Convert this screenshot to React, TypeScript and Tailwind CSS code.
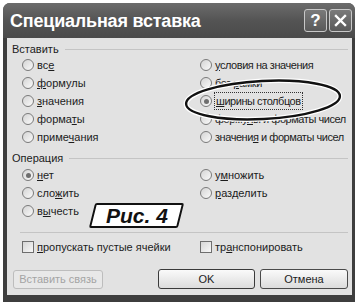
type Part = [string, string, string];

const Radio = ({ t, on = false, focus = false, tight = false }: { t: Part; on?: boolean; focus?: boolean; tight?: boolean }) => (
  <div className={`flex items-center h-[18px] gap-[3px] whitespace-nowrap ${tight ? "tracking-[-0.45px]" : ""}`}>
    <span className="w-[12px] h-[12px] rounded-full border border-[#7a7a7a] bg-gradient-to-br from-[#d4d4d4] to-[#fafafa] flex items-center justify-center shrink-0">
      {on && <span className="w-[5px] h-[5px] rounded-full bg-[#6e6e6e]" />}
    </span>
    <span className={focus ? "outline outline-1 outline-dotted outline-[#333] px-[1px]" : ""}>
      {t[0]}
      <span className="underline">{t[1]}</span>
      {t[2]}
    </span>
  </div>
);

const Check = ({ t }: { t: Part }) => (
  <div className="flex items-center h-[18px] gap-[3px] whitespace-nowrap">
    <span className="w-[12px] h-[12px] border border-[#6e6e6e] bg-gradient-to-br from-[#d6d6d6] to-[#f8f8f8] shrink-0" />
    <span>
      {t[0]}
      <span className="underline">{t[1]}</span>
      {t[2]}
    </span>
  </div>
);

const GroupLabel = ({ text }: { text: string }) => (
  <div className="flex items-center h-[12px] gap-[6px]">
    <span>{text}</span>
    <div className="flex-1 h-px bg-[#c4c4c4]" />
  </div>
);

export default function App() {
  return (
    <div className="w-[363px] h-[302px] bg-white pt-[3px] pl-[3px] font-['Liberation_Sans',Arial,sans-serif] text-[11px] text-[#1c1c1c] overflow-hidden">
      <div className="w-[352px] h-[299px] rounded-t-[7px] bg-[#3e3e3e] flex flex-col">
        {/* Title bar */}
        <div className="h-[35px] rounded-t-[7px] bg-gradient-to-b from-[#6c6c6c] via-[#545454] to-[#4a4a4a] flex items-center pl-[7px] pr-[3px]">
          <span className="text-white font-bold text-[18px] tracking-[-0.2px] flex-1 leading-none">
            Специальная вставка
          </span>
          <div className="flex gap-[2px]">
            <div className="w-[23px] h-[23px] rounded-[3px] border border-[#c8c8c8] bg-gradient-to-b from-[#7a7a7a] to-[#5a5a5a] flex items-center justify-center text-white font-bold text-[17px] leading-none">
              ?
            </div>
            <div className="w-[23px] h-[23px] rounded-[3px] border border-[#c8c8c8] bg-gradient-to-b from-[#7a7a7a] to-[#5a5a5a] flex items-center justify-center">
              <svg width="13" height="13" viewBox="0 0 13 13">
                <path d="M2 2 L11 11 M11 2 L2 11" stroke="white" strokeWidth="2.4" strokeLinecap="square" />
              </svg>
            </div>
          </div>
        </div>

        {/* Client area */}
        <div className="relative ml-[4px] mr-[3px] h-[257px] bg-[#e2e2e2] pt-[5px] pl-[5px] pr-[4px]">
          <GroupLabel text="Вставить" />
          <div className="grid grid-cols-[178px_1fr] pl-[10px] mt-[1px]">
            <div className="flex flex-col">
              <Radio t={["вс", "е", ""]} />
              <Radio t={["", "ф", "ормулы"]} />
              <Radio t={["", "з", "начения"]} />
              <Radio t={["форма", "т", "ы"]} />
              <Radio t={["приме", "ч", "ания"]} />
            </div>
            <div className="flex flex-col">
              <Radio t={["", "у", "словия на значения"]} tight />
              <Radio t={["без ", "р", "амки"]} tight />
              <Radio t={["", "ш", "ирины столбцов"]} on focus tight />
              <Radio t={["форму", "л", "ы и форматы чисел"]} tight />
              <Radio t={["значени", "я", " и форматы чисел"]} tight />
            </div>
          </div>

          <div className="mt-[6px]">
            <GroupLabel text="Операция" />
          </div>
          <div className="grid grid-cols-[178px_1fr] pl-[10px] mt-[2px]">
            <div className="flex flex-col">
              <Radio t={["", "н", "ет"]} on />
              <Radio t={["сло", "ж", "ить"]} />
              <Radio t={["в", "ы", "честь"]} />
            </div>
            <div className="flex flex-col">
              <Radio t={["у", "м", "ножить"]} />
              <Radio t={["", "р", "азделить"]} />
            </div>
          </div>

          <div className="mt-[12px] ml-[8px] h-px bg-[#c4c4c4]" />

          <div className="grid grid-cols-[178px_1fr] pl-[10px] mt-[5px]">
            <Check t={["", "п", "ропускать пустые ячейки"]} />
            <Check t={["тр", "а", "нспонировать"]} />
          </div>

          <div className="flex items-center mt-[13px] pl-[1px]">
            <div className="w-[90px] h-[19px] rounded-[3px] border border-[#bdbdbd] bg-[#e8e8e8] text-[#a4a4a4] flex items-center justify-center">
              Вставить связь
            </div>
            <div className="w-[55px]" />
            <div className="w-[97px] h-[20px] rounded-[3px] border border-[#3a3a3a] bg-gradient-to-b from-[#fafafa] to-[#dcdcdc] flex items-center justify-center">
              OK
            </div>
            <div className="w-[5px]" />
            <div className="w-[88px] h-[20px] rounded-[3px] border border-[#4a4a4a] bg-gradient-to-b from-[#fafafa] to-[#dcdcdc] flex items-center justify-center">
              Отмена
            </div>
          </div>

          {/* Oval annotation */}
          <svg className="absolute left-[170px] top-[34px]" width="180" height="56" viewBox="0 0 180 56">
            <ellipse cx="86" cy="28" rx="77" ry="19" transform="rotate(-3 86 28)" fill="none" stroke="white" strokeWidth="5" />
            <ellipse cx="86" cy="28" rx="77" ry="19" transform="rotate(-3 86 28)" fill="none" stroke="#111" strokeWidth="2.4" />
          </svg>

          {/* Figure label */}
          <div className="absolute left-[85px] top-[165px] w-[89px] h-[25px] -skew-x-[14deg] border-2 border-[#111] rounded-[2px] bg-white flex items-center justify-center">
            <span className="skew-x-[14deg] italic font-bold text-[21px] text-[#111] leading-none">Рис. 4</span>
          </div>
        </div>
      </div>
    </div>
  );
}
